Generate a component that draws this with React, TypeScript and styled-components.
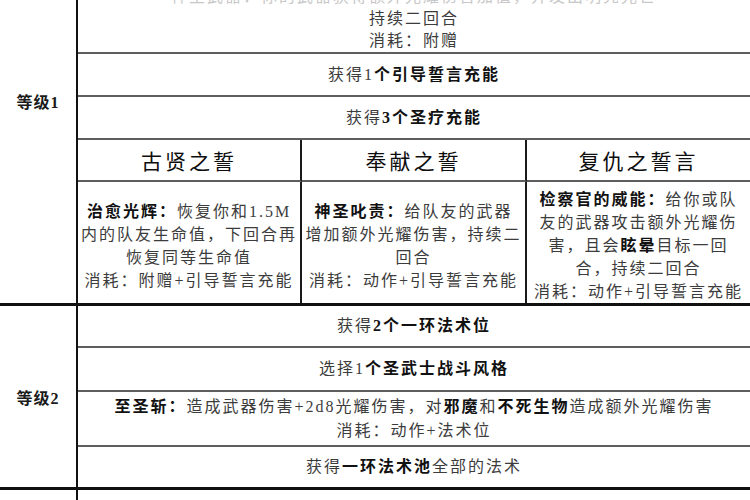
import styled, { createGlobalStyle } from 'styled-components';

// ------------------- Global -------------------

const GlobalStyle = createGlobalStyle`
  html, body {
    margin: 0;
    padding: 0;
    background: #fff;
    overflow: hidden;
  }
  body {
    font-family: "Liberation Serif", "Noto Sans CJK SC", serif;
  }
`;

// ------------------- Styled Components -------------------

const Sheet = styled.div`
  width: 750px;
  margin-top: -102px;
  display: flex;
  flex-direction: column;
  color: #3c3c3c;
  font-size: 16px;
  letter-spacing: 2px;
`;

const Level = styled.section`
  display: grid;
  grid-template-columns: 78px 1fr;
  border-bottom: 3px solid #111;
`;

const LevelName = styled.div`
  display: flex;
  align-items: center;
  justify-content: center;
  border-right: 2px solid #111;
  font-weight: 700;
  color: #1a1a1a;
  letter-spacing: 1px;
`;

const Rows = styled.div`
  display: flex;
  flex-direction: column;
`;

const Row = styled.div<{ $h: number; $lh?: number; $last?: boolean; $bottom?: boolean }>`
  box-sizing: border-box;
  height: ${p => p.$h}px;
  display: flex;
  flex-direction: column;
  align-items: center;
  justify-content: ${p => (p.$bottom ? 'flex-end' : 'center')};
  line-height: ${p => p.$lh ?? 22}px;
  white-space: nowrap;
  overflow: hidden;
  border-bottom: ${p => (p.$last ? 'none' : '2px solid #5e5e5e')};
`;

const Line = styled.div`
  display: block;
`;

const Faded = styled.div`
  display: block;
  color: #c8c8c8;
`;

const Strong = styled.span`
  font-weight: 700;
  color: #111;
`;

const OathGrid = styled.div`
  display: grid;
  grid-template-columns: 224px 225px 1fr;
  grid-template-rows: 42px 121px;
`;

const OathTitle = styled.div<{ $edge?: boolean }>`
  box-sizing: border-box;
  display: flex;
  align-items: center;
  justify-content: center;
  font-size: 21px;
  letter-spacing: 3px;
  color: #0d0d0d;
  border-bottom: 2px solid #5e5e5e;
  border-right: ${p => (p.$edge ? 'none' : '2px solid #1a1a1a')};
`;

const OathBody = styled.div<{ $edge?: boolean }>`
  box-sizing: border-box;
  display: flex;
  flex-direction: column;
  align-items: center;
  justify-content: center;
  padding-top: 6px;
  line-height: 23px;
  white-space: nowrap;
  overflow: hidden;
  border-right: ${p => (p.$edge ? 'none' : '2px solid #1a1a1a')};
`;

// ------------------- App -------------------

export default function App() {
  return (
    <>
      <GlobalStyle />
      <Sheet>
        <Level>
          <LevelName>等级1</LevelName>
          <Rows>
            <Row $h={156} $bottom>
              <Faded>神圣武器：你的武器获得额外光耀伤害加值，并发出明亮光芒</Faded>
              <Line>持续二回合</Line>
              <Line>消耗：附赠</Line>
            </Row>
            <Row $h={43}>
              <Line>
                获得1<Strong>个引导誓言充能</Strong>
              </Line>
            </Row>
            <Row $h={43}>
              <Line>
                获得<Strong>3个圣疗充能</Strong>
              </Line>
            </Row>
            <OathGrid>
              <OathTitle>古贤之誓</OathTitle>
              <OathTitle>奉献之誓</OathTitle>
              <OathTitle $edge>复仇之誓言</OathTitle>
              <OathBody>
                <Line>
                  <Strong>治愈光辉：</Strong>恢复你和1.5M
                </Line>
                <Line>内的队友生命值，下回合再</Line>
                <Line>恢复同等生命值</Line>
                <Line>消耗：附赠+引导誓言充能</Line>
              </OathBody>
              <OathBody>
                <Line>
                  <Strong>神圣叱责：</Strong>给队友的武器
                </Line>
                <Line>增加额外光耀伤害，持续二</Line>
                <Line>回合</Line>
                <Line>消耗：动作+引导誓言充能</Line>
              </OathBody>
              <OathBody $edge>
                <Line>
                  <Strong>检察官的威能：</Strong>给你或队
                </Line>
                <Line>友的武器攻击额外光耀伤</Line>
                <Line>
                  害，且会<Strong>眩晕</Strong>目标一回
                </Line>
                <Line>合，持续二回合</Line>
                <Line>消耗：动作+引导誓言充能</Line>
              </OathBody>
            </OathGrid>
          </Rows>
        </Level>

        <Level>
          <LevelName>等级2</LevelName>
          <Rows>
            <Row $h={42}>
              <Line>
                获得<Strong>2个一环法术位</Strong>
              </Line>
            </Row>
            <Row $h={44}>
              <Line>
                选择1<Strong>个圣武士战斗风格</Strong>
              </Line>
            </Row>
            <Row $h={55} $lh={24}>
              <Line>
                <Strong>至圣斩：</Strong>造成武器伤害+2d8光耀伤害，对<Strong>邪魔</Strong>和
                <Strong>不死生物</Strong>造成额外光耀伤害
              </Line>
              <Line>消耗：动作+法术位</Line>
            </Row>
            <Row $h={40} $last>
              <Line>
                获得<Strong>一环法术池</Strong>全部的法术
              </Line>
            </Row>
          </Rows>
        </Level>

        <Level>
          <LevelName />
          <Rows>
            <Row $h={20} $last />
          </Rows>
        </Level>
      </Sheet>
    </>
  );
}
